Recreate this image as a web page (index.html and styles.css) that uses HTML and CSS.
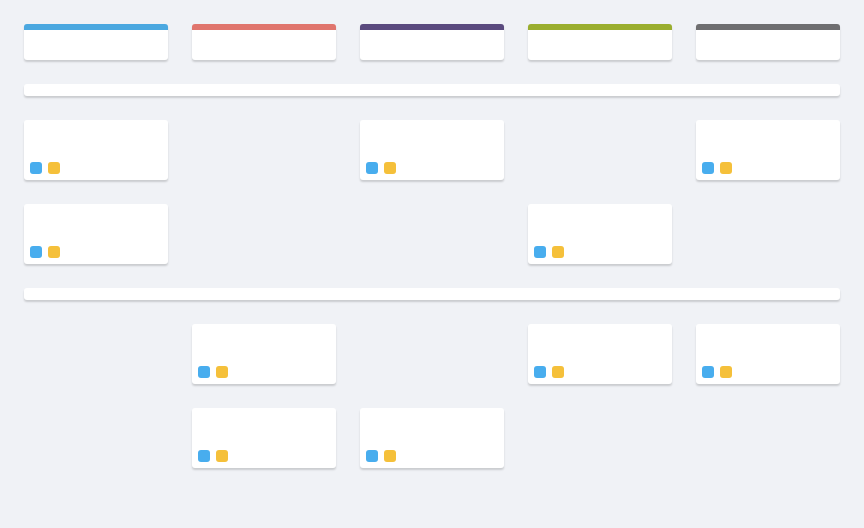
FILE: index.html
```html
<!DOCTYPE html>
<html lang="en">
<head>
    <meta charset="UTF-8">
    <meta name="viewport" content="width=device-width, initial-scale=1.0">
    <title>Board</title>
    <link rel="stylesheet" href="styles.css">
</head>
<body>
    <div class="board">
        <!-- Column headers -->
        <div class="column-head blue"></div>
        <div class="column-head red"></div>
        <div class="column-head purple"></div>
        <div class="column-head green"></div>
        <div class="column-head gray"></div>

        <!-- Lane 1 -->
        <div class="lane"></div>

        <div class="card"><div class="tags"><span class="tag tag-blue"></span><span class="tag tag-yellow"></span></div></div>
        <div class="slot"></div>
        <div class="card"><div class="tags"><span class="tag tag-blue"></span><span class="tag tag-yellow"></span></div></div>
        <div class="slot"></div>
        <div class="card"><div class="tags"><span class="tag tag-blue"></span><span class="tag tag-yellow"></span></div></div>

        <div class="card"><div class="tags"><span class="tag tag-blue"></span><span class="tag tag-yellow"></span></div></div>
        <div class="slot"></div>
        <div class="slot"></div>
        <div class="card"><div class="tags"><span class="tag tag-blue"></span><span class="tag tag-yellow"></span></div></div>
        <div class="slot"></div>

        <!-- Lane 2 -->
        <div class="lane"></div>

        <div class="slot"></div>
        <div class="card"><div class="tags"><span class="tag tag-blue"></span><span class="tag tag-yellow"></span></div></div>
        <div class="slot"></div>
        <div class="card"><div class="tags"><span class="tag tag-blue"></span><span class="tag tag-yellow"></span></div></div>
        <div class="card"><div class="tags"><span class="tag tag-blue"></span><span class="tag tag-yellow"></span></div></div>

        <div class="slot"></div>
        <div class="card"><div class="tags"><span class="tag tag-blue"></span><span class="tag tag-yellow"></span></div></div>
        <div class="card"><div class="tags"><span class="tag tag-blue"></span><span class="tag tag-yellow"></span></div></div>
        <div class="slot"></div>
        <div class="slot"></div>
    </div>
</body>
</html>
```

FILE: styles.css
```css
* {
    margin: 0;
    padding: 0;
    box-sizing: border-box;
    font-family: "Liberation Sans", Arial, sans-serif;
}

body {
    background-color: #f0f2f6;
    min-height: 100vh;
}

.board {
    display: grid;
    grid-template-columns: repeat(5, 144px);
    grid-template-rows: 36px 12px 60px 60px 12px 60px 60px;
    gap: 24px;
    padding: 24px;
}

.column-head {
    background-color: white;
    border-radius: 3px;
    border-top: 6px solid #ccc;
    box-shadow: 0 2px 2px rgba(0, 0, 0, 0.16);
}

.column-head.blue { border-top-color: #4ba8e0; }
.column-head.red { border-top-color: #e0756d; }
.column-head.purple { border-top-color: #5a4a7e; }
.column-head.green { border-top-color: #9aae2f; }
.column-head.gray { border-top-color: #6e6e70; }

.lane {
    grid-column: 1 / -1;
    background-color: white;
    border-radius: 3px;
    box-shadow: 0 2px 2px rgba(0, 0, 0, 0.16);
}

.card {
    background-color: white;
    border-radius: 3px;
    box-shadow: 0 2px 2px rgba(0, 0, 0, 0.16);
    display: flex;
    align-items: flex-end;
    padding: 6px;
}

.tags {
    display: flex;
    gap: 6px;
}

.tag {
    width: 12px;
    height: 12px;
    border-radius: 3px;
}

.tag-blue { background-color: #48adee; }
.tag-yellow { background-color: #f5c03a; }
```
